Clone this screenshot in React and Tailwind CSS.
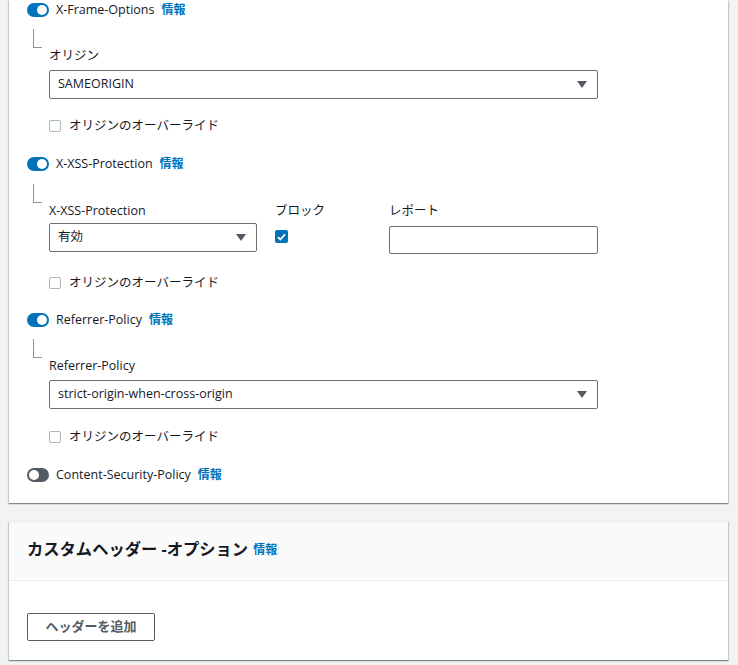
import React from 'react';

const font = { fontFamily: '"Open Sans", "Noto Sans CJK JP", sans-serif' };

const Info = ({ className = '' }) => (
  <span className={`text-[12px] font-bold text-[#0073bb] ${className}`}>情報</span>
);

const Toggle = ({ on }) => (
  <span
    className={`flex h-[14px] w-[22px] items-center rounded-full px-[2px] ${
      on ? 'justify-end bg-[#0073bb]' : 'justify-start bg-[#545b64]'
    }`}
  >
    <span className="h-[10px] w-[10px] rounded-full bg-white" />
  </span>
);

const ToggleRow = ({ label, on = true, className = '' }) => (
  <div className={`flex h-[18px] items-center ${className}`}>
    <Toggle on={on} />
    <span className="ml-[7px] text-[12.5px] text-[#16191f]">{label}</span>
    <Info className="ml-[7px]" />
  </div>
);

const Bracket = ({ className = '' }) => (
  <div className={`ml-[6px] h-[19px] w-[9px] border-b border-l border-[#879596] ${className}`} />
);

const Caret = () => (
  <svg width="10" height="7" viewBox="0 0 10 7" className="shrink-0">
    <path d="M0 0h10L5 7z" fill="#545b64" />
  </svg>
);

const Select = ({ value, className = '' }) => (
  <div
    className={`flex h-[29px] items-center justify-between rounded-[2px] border border-[#687078] bg-white pl-[8px] pr-[10px] text-[12.5px] text-[#16191f] ${className}`}
  >
    <span>{value}</span>
    <Caret />
  </div>
);

const Override = ({ className = '' }) => (
  <div className={`flex h-[16px] items-center pl-[22px] ${className}`}>
    <span className="h-[12px] w-[12px] rounded-[2px] border border-[#aab7b8] bg-white" />
    <span className="ml-[8px] text-[12.5px] text-[#16191f]">オリジンのオーバーライド</span>
  </div>
);

const Label = ({ children, className = '' }) => (
  <div className={`flex h-[16px] items-center text-[12.5px] text-[#16191f] ${className}`}>{children}</div>
);

const cardShadow =
  'shadow-[0_1px_1px_0_rgba(0,28,36,0.3),1px_1px_1px_0_rgba(0,28,36,0.15),-1px_1px_1px_0_rgba(0,28,36,0.15)]';

export default function App() {
  return (
    <div className="min-h-[665px] bg-[#f2f3f3] pl-[9px] pr-[10px]" style={font}>
      <div className={`bg-white pl-[18px] pt-[1px] pb-[19px] ${cardShadow}`}>
        <ToggleRow label="X-Frame-Options" />
        <Bracket className="mt-[10px]" />
        <div className="pl-[22px]">
          <Label>オリジン</Label>
          <Select value="SAMEORIGIN" className="mt-[6px] w-[549px]" />
        </div>
        <Override className="mt-[19px]" />

        <ToggleRow label="X-XSS-Protection" className="mt-[21px]" />
        <Bracket className="mt-[11px]" />
        <div className="flex pl-[22px]">
          <div className="w-[208px]">
            <Label>X-XSS-Protection</Label>
            <Select value="有効" className="mt-[4px]" />
          </div>
          <div className="ml-[18px] w-[114px]">
            <Label>ブロック</Label>
            <span className="mt-[11px] flex h-[13px] w-[13px] items-center justify-center rounded-[2px] bg-[#0073bb]">
              <svg width="9" height="8" viewBox="0 0 9 8">
                <path d="M1 4.2l2.3 2.3L8 1.3" fill="none" stroke="white" strokeWidth="1.8" />
              </svg>
            </span>
          </div>
          <div className="w-[209px]">
            <Label>レポート</Label>
            <div className="mt-[7px] h-[28px] rounded-[2px] border border-[#687078] bg-white" />
          </div>
        </div>
        <Override className="mt-[21px]" />

        <ToggleRow label="Referrer-Policy" className="mt-[20px]" />
        <Bracket className="mt-[10px]" />
        <div className="pl-[22px]">
          <Label>Referrer-Policy</Label>
          <Select value="strict-origin-when-cross-origin" className="mt-[6px] w-[549px]" />
        </div>
        <Override className="mt-[20px]" />

        <ToggleRow label="Content-Security-Policy" on={false} className="mt-[21px]" />
      </div>

      <div className={`mt-[18px] border-t border-[#eaeded] bg-white ${cardShadow}`}>
        <div className="flex h-[59px] items-center border-b border-[#eaeded] bg-[#fafafa] pb-[4px] pl-[18px]">
          <span className="text-[16.3px] font-bold text-[#16191f]">カスタムヘッダー -オプション</span>
          <Info className="ml-[5px] mt-[2px]" />
        </div>
        <div className="pl-[18px] pt-[32px] pb-[19px]">
          <button className="flex h-[28px] w-[128px] items-center justify-center rounded-[2px] border border-[#545b64] bg-white text-[13px] font-bold text-[#545b64]">
            ヘッダーを追加
          </button>
        </div>
      </div>
    </div>
  );
}
